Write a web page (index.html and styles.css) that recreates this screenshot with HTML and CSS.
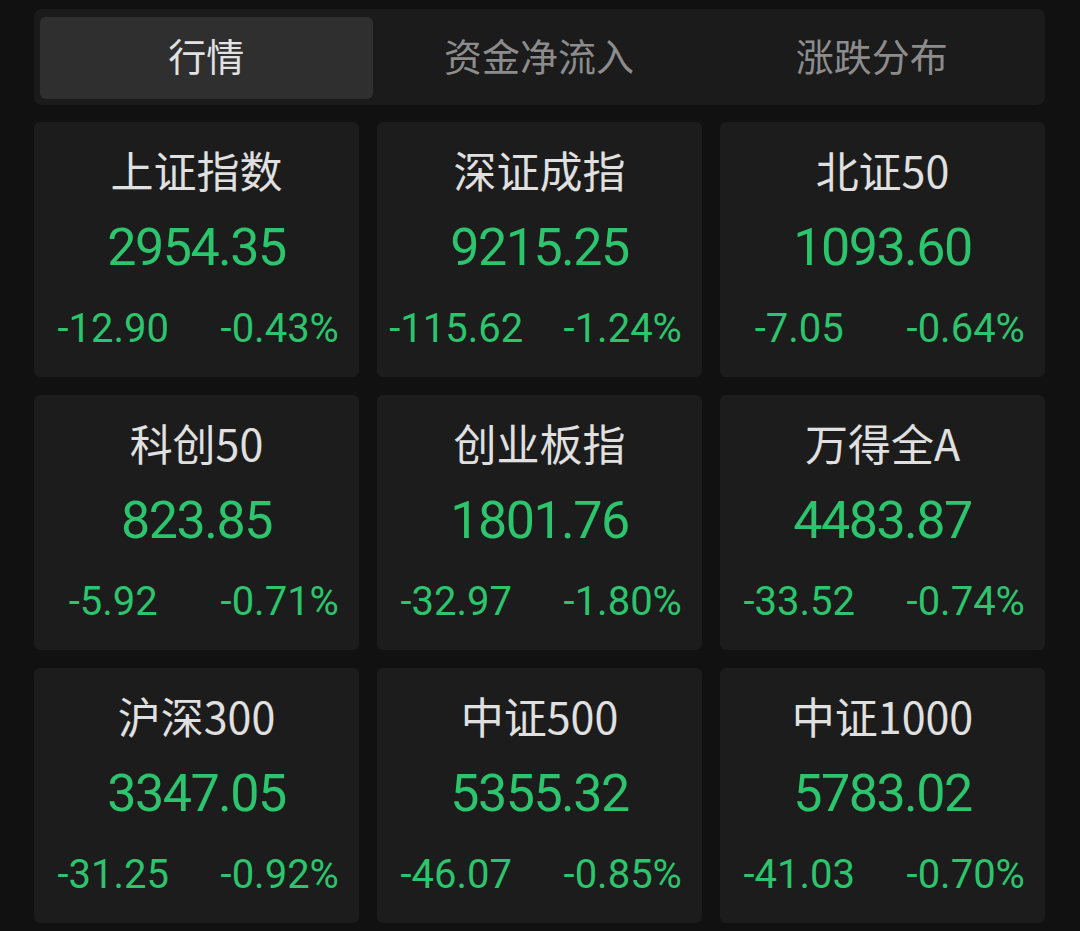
FILE: index.html
```html
<!DOCTYPE html>
<html lang="zh-CN">
<head>
<meta charset="utf-8">
<title>行情</title>
<link rel="stylesheet" href="styles.css">
</head>
<body>
<div class="page">
  <div class="tabs">
    <div class="tab active">行情</div>
    <div class="tab">资金净流入</div>
    <div class="tab">涨跌分布</div>
  </div>
  <div class="grid">
    <div class="card"><div class="name">上证指数</div><div class="price">2954.35</div><div class="chg"><span>-12.90</span><span>-0.43%</span></div></div>
    <div class="card"><div class="name">深证成指</div><div class="price">9215.25</div><div class="chg"><span>-115.62</span><span>-1.24%</span></div></div>
    <div class="card"><div class="name">北证50</div><div class="price">1093.60</div><div class="chg"><span>-7.05</span><span>-0.64%</span></div></div>
    <div class="card"><div class="name">科创50</div><div class="price">823.85</div><div class="chg"><span>-5.92</span><span>-0.71%</span></div></div>
    <div class="card"><div class="name">创业板指</div><div class="price">1801.76</div><div class="chg"><span>-32.97</span><span>-1.80%</span></div></div>
    <div class="card"><div class="name">万得全A</div><div class="price">4483.87</div><div class="chg"><span>-33.52</span><span>-0.74%</span></div></div>
    <div class="card"><div class="name">沪深300</div><div class="price">3347.05</div><div class="chg"><span>-31.25</span><span>-0.92%</span></div></div>
    <div class="card"><div class="name">中证500</div><div class="price">5355.32</div><div class="chg"><span>-46.07</span><span>-0.85%</span></div></div>
    <div class="card"><div class="name">中证1000</div><div class="price">5783.02</div><div class="chg"><span>-41.03</span><span>-0.70%</span></div></div>
  </div>
</div>
</body>
</html>
```
FILE: styles.css
```css
html, body {
  margin: 0;
  padding: 0;
  background: #111111;
}
body {
  width: 1080px;
  height: 931px;
  overflow: hidden;
  font-family: "Noto Sans CJK SC", "Noto Sans", sans-serif;
}
.page {
  padding: 9px 35px 0 34px;
}
.tabs {
  display: flex;
  background: #1b1b1b;
  border-radius: 8px;
  padding: 8px 7px 6px 6px;
  height: 96px;
  box-sizing: border-box;
}
.tab {
  flex: 1;
  display: flex;
  align-items: center;
  justify-content: center;
  font-size: 38px;
  line-height: 44px;
  padding-bottom: 6px;
  box-sizing: border-box;
  color: #8c8c8c;
  border-radius: 6px;
}
.tab.active {
  background: #2f2f2f;
  color: #e2e2e2;
}
.grid {
  margin-top: 17px;
  display: grid;
  grid-template-columns: repeat(3, 1fr);
  column-gap: 18px;
  row-gap: 18px;
}
.card {
  background: #1c1c1c;
  border-radius: 6px;
  height: 255px;
  padding-top: 22px;
  box-sizing: border-box;
  display: flex;
  flex-direction: column;
  align-items: stretch;
}
.name {
  font-size: 43px;
  line-height: 50px;
  height: 50px;
  color: #e0e0e0;
  text-align: center;
}
.price {
  margin-top: 24px;
  font-family: Roboto, "Noto Sans", sans-serif;
  font-size: 52px;
  letter-spacing: -1.5px;
  line-height: 60px;
  color: #2cc46c;
  text-align: center;
}
.chg {
  margin-top: 29px;
  display: flex;
  font-family: Roboto, "Noto Sans", sans-serif;
  font-size: 40px;
  line-height: 44px;
  color: #2cc46c;
}
.chg span {
  flex: 1;
  text-align: center;
}
.chg span:last-child {
  padding-left: 8px;
}
```
